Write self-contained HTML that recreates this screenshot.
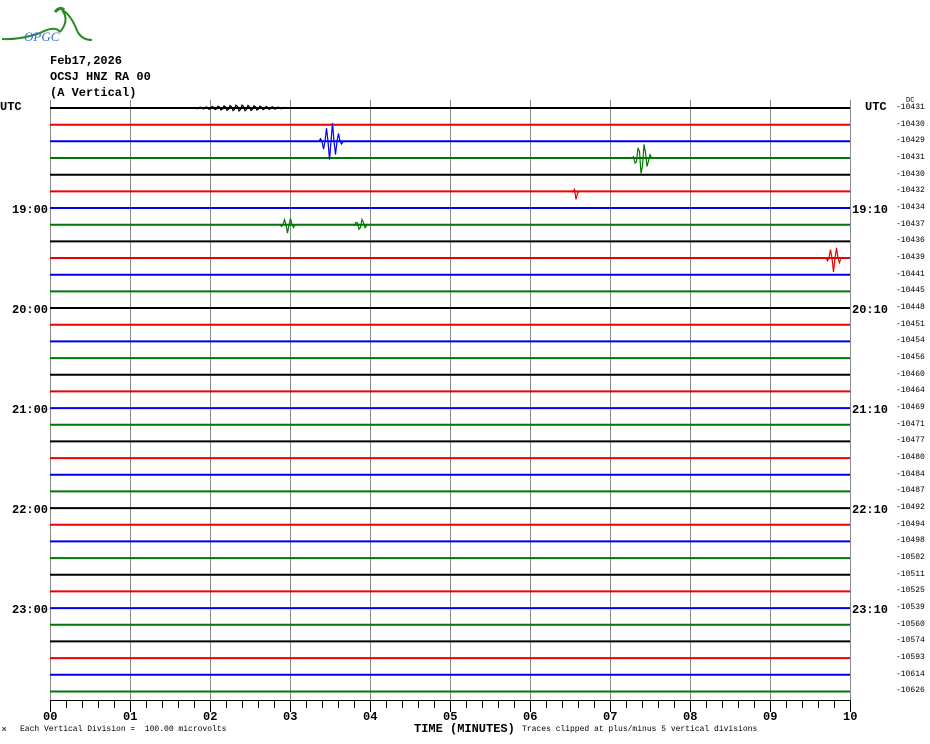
<!DOCTYPE html>
<html><head><meta charset="utf-8"><style>
html,body{margin:0;padding:0;background:#fff;}
body{width:930px;height:744px;position:relative;overflow:hidden;font-family:"Liberation Mono",monospace;}
.t{position:absolute;font-size:12px;font-weight:bold;color:#000;white-space:pre;line-height:14px;}
.r{position:absolute;left:896px;font-size:8px;color:#000;font-family:"Liberation Mono",monospace;}
</style></head><body>
<svg width="930" height="744" style="position:absolute;left:0;top:0">
<path d="M2 39 Q20 40 40 33 Q55 25 60 32 M60 32 Q70 20 62 10 Q70 14 76 28 Q80 40 92 40" stroke="#2a8a2a" stroke-width="2" fill="none"/>
<path d="M55 12 Q60 6 64 10" stroke="#2a8a2a" stroke-width="3" fill="none"/>
<text x="24" y="41" font-family="Liberation Serif,serif" font-style="italic" font-size="13" fill="#3a6fd0">OPGC</text>
<g stroke="#888" stroke-width="1">
<line x1="130.5" y1="100" x2="130.5" y2="700"/><line x1="210.5" y1="100" x2="210.5" y2="700"/><line x1="290.5" y1="100" x2="290.5" y2="700"/><line x1="370.5" y1="100" x2="370.5" y2="700"/><line x1="450.5" y1="100" x2="450.5" y2="700"/><line x1="530.5" y1="100" x2="530.5" y2="700"/><line x1="610.5" y1="100" x2="610.5" y2="700"/><line x1="690.5" y1="100" x2="690.5" y2="700"/><line x1="770.5" y1="100" x2="770.5" y2="700"/>
<line x1="50.5" y1="100" x2="50.5" y2="700"/><line x1="850.5" y1="100" x2="850.5" y2="700"/>
</g>
<g id="tr" stroke-width="2" fill="none"></g>
<g id="ax" stroke="#000" stroke-width="1"></g>
</svg>
<script>
var cols=["#000","#e00","#00e","#070"];
var g=document.getElementById("tr"),s="";
for(var i=0;i<36;i++){var y=108+i*16.67;s+='<line x1="50" x2="850" y1="'+y.toFixed(1)+'" y2="'+y.toFixed(1)+'" stroke="'+cols[i%4]+'"/>';}
function burst(i,x0,w,a){var y=108+i*16.67,d="M"+(x0-w)+" "+y;for(var x=x0-w;x<=x0+w;x+=1.5){var k=1-Math.abs(x-x0)/w;var v=a*k*(((x*7)%3)-1)*((Math.floor(x)%2)?1:-1);d+=" L"+x.toFixed(1)+" "+(y+v).toFixed(1);}return '<path d="'+d+'" stroke="'+cols[i%4]+'" stroke-width="1.2"/>';}
s+=burst(2,331,12,14)+burst(3,642,10,17)+burst(9,834,8,10)+burst(7,288,8,6)+burst(7,361,8,6)+burst(0,240,55,3)+burst(5,576,3,8);
g.innerHTML=s;
var a='<line x1="50" y1="700.5" x2="850" y2="700.5"/>';
for(var x=50;x<=850;x+=16){a+='<line x1="'+(x+0.5)+'" y1="700" x2="'+(x+0.5)+'" y2="'+((x-50)%80==0?712:708)+'"/>';}
document.getElementById("ax").innerHTML=a;
</script>
<div class="t" style="left:50px;top:54px">Feb17,2026</div>
<div class="t" style="left:50px;top:70px">OCSJ HNZ RA 00</div>
<div class="t" style="left:50px;top:86px">(A Vertical)</div>
<div class="t" style="left:0;top:100px">UTC</div>
<div class="t" style="left:865px;top:100px">UTC</div>
<div class="t" style="left:12px;top:203px">19:00</div>
<div class="t" style="left:12px;top:303px">20:00</div>
<div class="t" style="left:12px;top:403px">21:00</div>
<div class="t" style="left:12px;top:503px">22:00</div>
<div class="t" style="left:12px;top:603px">23:00</div>
<div class="t" style="left:852px;top:203px">19:10</div>
<div class="t" style="left:852px;top:303px">20:10</div>
<div class="t" style="left:852px;top:403px">21:10</div>
<div class="t" style="left:852px;top:503px">22:10</div>
<div class="t" style="left:852px;top:603px">23:10</div>
<div id="rl"></div>
<script>
var v=[10431,10430,10429,10431,10430,10432,10434,10437,10436,10439,10441,10445,10448,10451,10454,10456,10460,10464,10469,10471,10477,10480,10484,10487,10492,10494,10498,10502,10511,10525,10539,10560,10574,10593,10614,10626];
var h="";for(var i=0;i<36;i++){h+='<div class="r" style="top:'+(103+i*16.67).toFixed(0)+'px">-'+v[i]+'</div>';}
h+='<div class="r" style="top:97px;left:906px;font-size:7px">DC</div>';
document.getElementById("rl").innerHTML=h;
</script>
<div class="t" style="left:43px;top:710px">00</div>
<div class="t" style="left:123px;top:710px">01</div>
<div class="t" style="left:203px;top:710px">02</div>
<div class="t" style="left:283px;top:710px">03</div>
<div class="t" style="left:363px;top:710px">04</div>
<div class="t" style="left:443px;top:710px">05</div>
<div class="t" style="left:523px;top:710px">06</div>
<div class="t" style="left:603px;top:710px">07</div>
<div class="t" style="left:683px;top:710px">08</div>
<div class="t" style="left:763px;top:710px">09</div>
<div class="t" style="left:843px;top:710px">10</div>
<div class="t" style="left:414px;top:722px">TIME (MINUTES)</div>
<div style="position:absolute;left:2px;top:726px;font-size:7px">ж</div>
<div style="position:absolute;left:20px;top:725px;font-size:8px;white-space:pre">Each Vertical Division =  100.00 microvolts</div>
<div style="position:absolute;left:522px;top:725px;font-size:8px;white-space:pre">Traces clipped at plus/minus 5 vertical divisions</div>
</body></html>
